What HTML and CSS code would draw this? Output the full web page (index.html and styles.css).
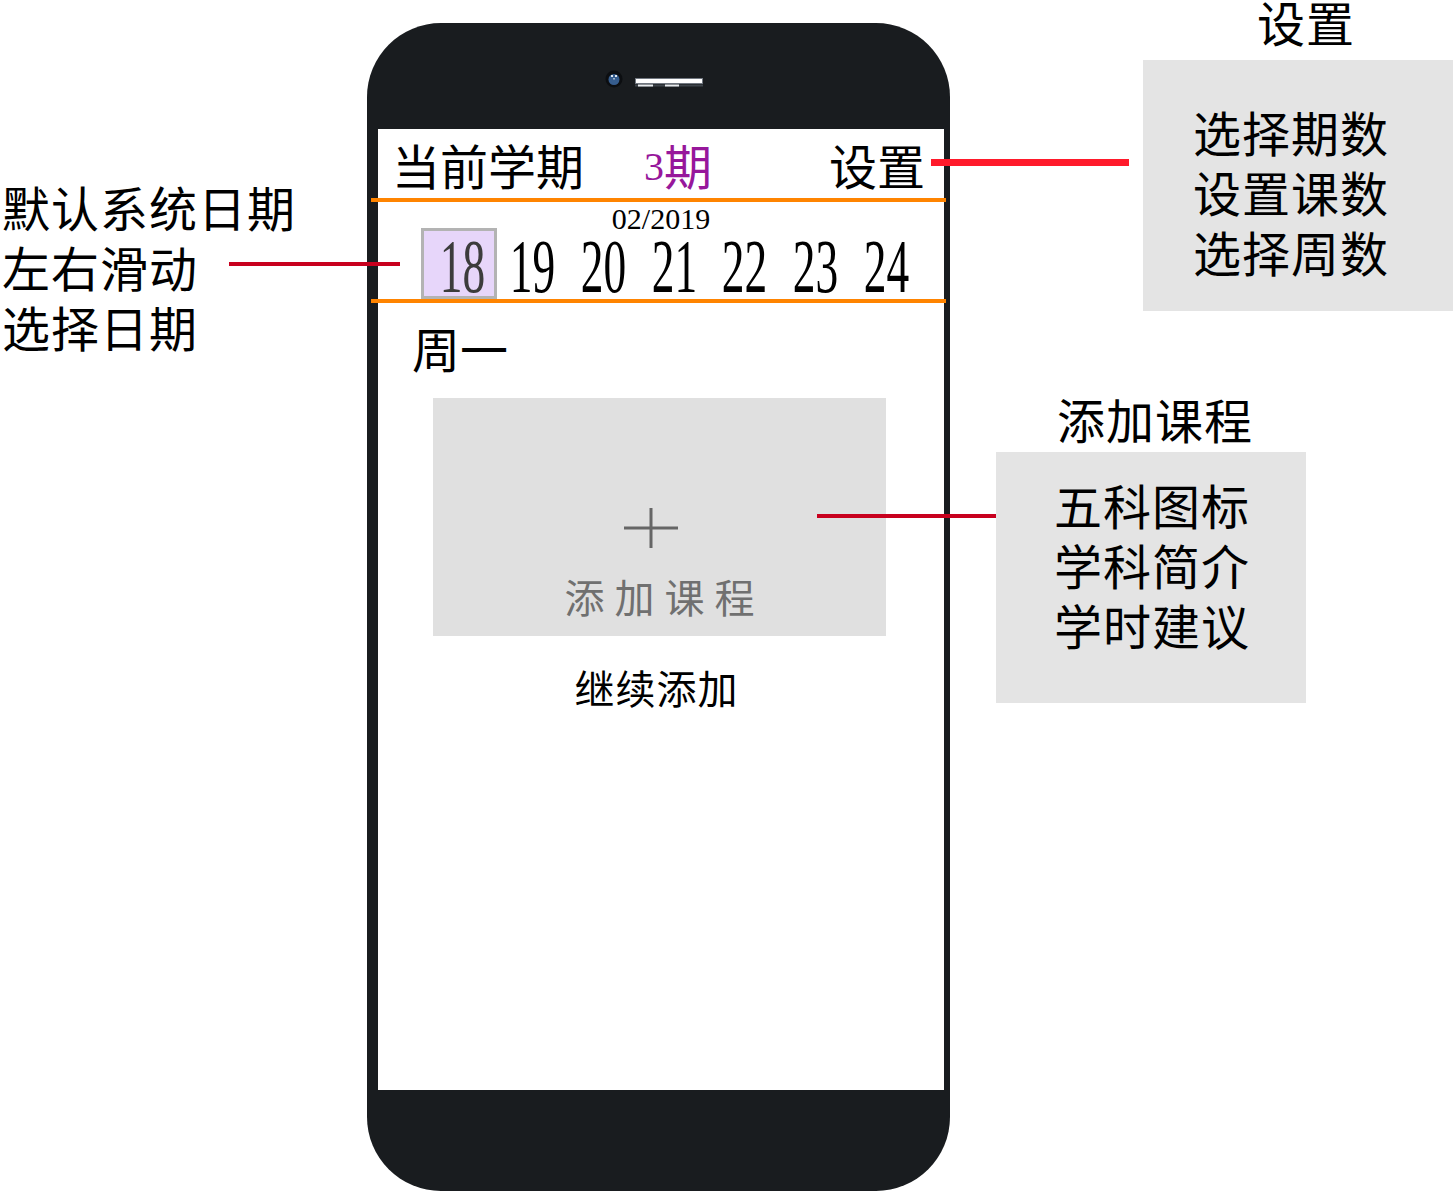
FILE: index.html
```html
<!DOCTYPE html>
<html lang="zh-CN">
<head>
<meta charset="utf-8">
<title>课程表 原型</title>
<link rel="stylesheet" href="styles.css">
</head>
<body>
<div class="stage">
  <div class="notes-left">
    <div class="note-line">默认系统日期</div>
    <div class="note-line">左右滑动</div>
    <div class="note-line">选择日期</div>
  </div>

  <div class="phone">
    <div class="bezel-top">
      <div class="sensors">
        <svg class="camera" width="18" height="18" viewBox="0 0 18 18">
          <circle cx="9" cy="9" r="8.5" fill="#0c0e11"/>
          <circle cx="9" cy="9.5" r="5.5" fill="#365d8e"/>
          <rect x="6" y="5" width="2" height="2" fill="#dfe6ee"/>
          <rect x="10" y="5" width="2" height="2" fill="#dfe6ee"/>
          <rect x="8" y="8" width="2" height="1.5" fill="#9fb4cc"/>
        </svg>
        <svg class="speaker" width="68" height="10" viewBox="0 0 68 10">
          <rect x="0.5" y="0.5" width="67" height="5" fill="#ffffff" stroke="#717780" stroke-width="1"/>
          <rect x="0" y="6.5" width="68" height="2" fill="#3e444b"/>
          <rect x="3" y="6.5" width="15" height="2" fill="#e9ecef"/>
          <rect x="30" y="6.5" width="14" height="2" fill="#e9ecef"/>
        </svg>
      </div>
    </div>
    <div class="screen">
      <div class="app-header">
        <span class="term-label">当前学期</span>
        <span class="term-value"><span class="num">3</span>期</span>
        <span class="settings">设置</span>
      </div>
      <div class="rule"></div>
      <div class="month">02/2019</div>
      <div class="days">
        <div class="day day-active"><span class="dnum">18</span></div>
        <div class="day"><span class="dnum">19</span></div>
        <div class="day"><span class="dnum">20</span></div>
        <div class="day"><span class="dnum">21</span></div>
        <div class="day"><span class="dnum">22</span></div>
        <div class="day"><span class="dnum">23</span></div>
        <div class="day"><span class="dnum">24</span></div>
      </div>
      <div class="rule"></div>
      <div class="weekday">周一</div>
      <div class="course-area">
        <div class="add-card">
          <svg class="plus" width="54" height="40" viewBox="0 0 54 40">
            <rect x="0" y="18.5" width="54" height="3" fill="#666666"/>
            <rect x="25.5" y="0" width="3" height="40" fill="#666666"/>
          </svg>
          <div class="add-label">添加课程</div>
        </div>
        <div class="continue">继续添加</div>
      </div>
    </div>
  </div>

  <div class="notes-right">
    <div class="note-group group-settings">
      <div class="note-title">设置</div>
      <div class="note-box">
        <div class="note-line">选择期数</div>
        <div class="note-line">设置课数</div>
        <div class="note-line">选择周数</div>
      </div>
    </div>
    <div class="note-group group-course">
      <div class="note-title">添加课程</div>
      <div class="note-box">
        <div class="note-line">五科图标</div>
        <div class="note-line">学科简介</div>
        <div class="note-line">学时建议</div>
      </div>
    </div>
  </div>

  <div class="connector conn-date"></div>
  <div class="connector conn-settings"></div>
  <div class="connector conn-course"></div>
</div>
</body>
</html>
```

FILE: styles.css
```css
html, body {
  margin: 0;
  padding: 0;
  background: #ffffff;
}

body {
  width: 1453px;
  height: 1192px;
  overflow: hidden;
  font-family: "Noto Sans CJK SC", "Noto Sans", sans-serif;
  color: #000000;
}

.stage {
  position: relative;
  width: 1453px;
  height: 1192px;
  display: flex;
  align-items: flex-start;
}

/* ---------- left annotation ---------- */
.notes-left {
  width: 367px;
  flex: none;
  box-sizing: border-box;
  padding-top: 176px;
  padding-left: 2px;
}

.note-line {
  font-size: 48px;
  line-height: 60px;
  letter-spacing: 1px;
  white-space: nowrap;
}

/* ---------- phone ---------- */
.phone {
  flex: none;
  width: 583px;
  height: 1168px;
  margin-top: 23px;
  box-sizing: border-box;
  padding: 0 6px 101px 11px;
  background: #191c1f;
  border-radius: 74px;
  display: flex;
  flex-direction: column;
}

.bezel-top {
  height: 106px;
  flex: none;
  box-sizing: border-box;
  padding-top: 47px;
  padding-left: 227px;
}

.sensors {
  display: flex;
  align-items: flex-start;
  gap: 12px;
}

.speaker {
  margin-top: 8px;
}

.screen {
  flex: 1;
  background: #ffffff;
  display: flex;
  flex-direction: column;
}

.app-header {
  display: flex;
  align-items: baseline;
  height: 69px;
  box-sizing: border-box;
  padding: 5px 19px 4px 14px;
  font-size: 48px;
  line-height: 60px;
}

.term-value {
  margin-left: 60px;
  color: #97179b;
}

.term-value .num {
  font-family: "Liberation Serif", serif;
  font-size: 40px;
  line-height: 1;
  vertical-align: 5px;
}

.settings {
  margin-left: auto;
}

.rule {
  height: 4px;
  background: #ff8400;
  margin: 0 -2px 0 -7px;
  flex: none;
}

.month {
  font-family: "Liberation Serif", serif;
  font-size: 30px;
  line-height: 18px;
  height: 26px;
  box-sizing: border-box;
  padding-top: 8px;
  text-align: center;
}

.days {
  display: grid;
  grid-template-columns: repeat(7, 70.7px);
  height: 71px;
  padding-left: 45.6px;
}

.day {
  font-family: "Liberation Serif", serif;
  font-size: 77px;
  line-height: 66px;
  padding-top: 5px;
  text-align: center;
  white-space: nowrap;
}

.day-active {
  justify-self: center;
  width: 76px;
  height: 71px;
  box-sizing: border-box;
  padding-top: 2px;
  border: 3px solid #b3b3b3;
  background: #e7d6fa;
  color: #3c3c3c;
}

.dnum {
  display: inline-block;
  transform: scaleX(0.59);
}

.weekday {
  margin-top: 14px;
  padding-left: 34px;
  font-size: 48px;
  line-height: 60px;
}

.course-area {
  margin-top: 21px;
  margin-left: 55px;
  width: 453px;
  display: flex;
  flex-direction: column;
  align-items: center;
}

.add-card {
  width: 453px;
  height: 238px;
  box-sizing: border-box;
  padding-top: 110px;
  background: #e0e0e0;
  display: flex;
  flex-direction: column;
  align-items: center;
}

.plus {
  margin-right: 18px;
  display: block;
}

.add-label {
  margin-top: 24px;
  font-size: 40px;
  line-height: 48px;
  letter-spacing: 10px;
  margin-right: -10px;
  color: #707070;
}

.continue {
  margin-top: 27px;
  font-size: 40px;
  line-height: 48px;
  letter-spacing: 1px;
  margin-right: 6px;
}

/* ---------- right annotations ---------- */
.notes-right {
  flex: 1;
  display: flex;
  flex-direction: column;
}

.note-title {
  font-size: 48px;
  line-height: 41px;
  padding-top: 1px;
  letter-spacing: 1px;
  white-space: nowrap;
}

.note-box {
  width: 310px;
  height: 251px;
  box-sizing: border-box;
  background: #e4e4e4;
}

.group-settings {
  margin-left: 193px;
}

.group-settings .note-title {
  padding-left: 114px;
}

.group-settings .note-box {
  margin-top: 18px;
  padding: 41px 0 0 50px;
}

.group-course {
  margin-left: 46px;
  margin-top: 86px;
}

.group-course .note-title {
  padding-left: 61px;
}

.group-course .note-box {
  margin-top: 13px;
  padding: 22px 0 0 58px;
}

/* ---------- connectors (overlay lines) ---------- */
.connector {
  position: absolute;
}

.conn-date {
  left: 229px;
  top: 262px;
  width: 171px;
  height: 4px;
  background: #c8001e;
}

.conn-settings {
  left: 931px;
  top: 159px;
  width: 198px;
  height: 7px;
  background: #ff1a2b;
}

.conn-course {
  left: 817px;
  top: 514px;
  width: 179px;
  height: 4px;
  background: #c8001e;
}
```
